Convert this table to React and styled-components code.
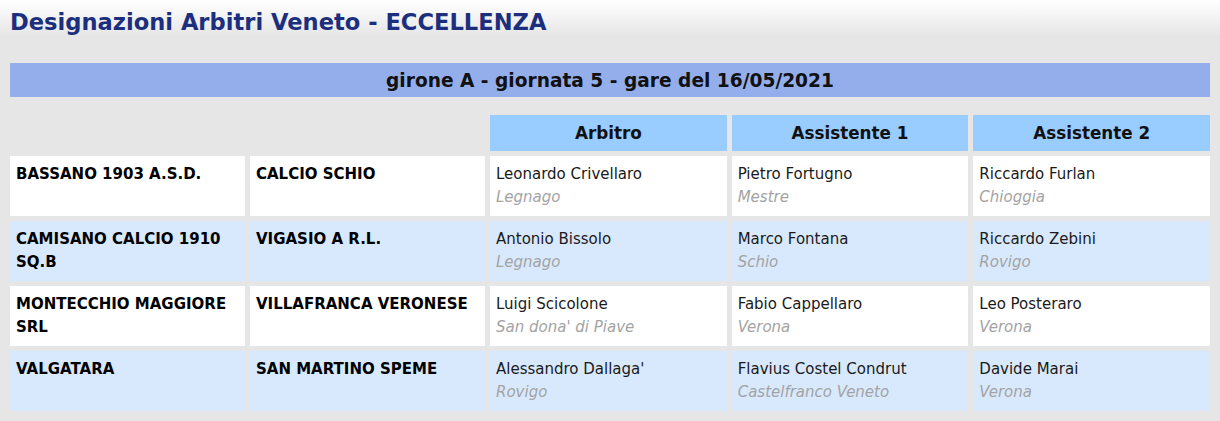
import styled, { createGlobalStyle } from 'styled-components';

const GlobalStyle = createGlobalStyle`
  html, body {
    margin: 0;
    padding: 0;
  }
  body {
    background: linear-gradient(to bottom, #ffffff 0px, #e6e6e6 36px) no-repeat, #e6e6e6;
    font-family: "DejaVu Sans", Verdana, sans-serif;
    min-height: 100vh;
  }
`;

const Page = styled.div`
  padding: 9px 10px 10px;
`;

const Title = styled.h1`
  margin: 0;
  font-size: 22.6px;
  line-height: 26px;
  font-weight: bold;
  color: #1c2f7e;
`;

const RoundBar = styled.div`
  margin-top: 28px;
  height: 34px;
  box-sizing: border-box;
  padding-top: 2px;
  line-height: 32px;
  background: #94aeec;
  color: #111;
  text-align: center;
  font-size: 18.6px;
  font-weight: bold;
`;

const Grid = styled.div`
  margin-top: 18px;
  display: grid;
  grid-template-columns: 235px 235px 1fr 1fr 1fr;
  column-gap: 5px;
  row-gap: 5px;
`;

const Blank = styled.div``;

const HeadCell = styled.div`
  height: 36px;
  line-height: 36px;
  background: #99ccff;
  color: #111;
  text-align: center;
  font-size: 16.8px;
  font-weight: bold;
`;

const Cell = styled.div`
  background: ${(p) => (p.$alt ? '#d8e9fd' : '#ffffff')};
  padding: 7px 6px;
  min-height: 46px;
  font-size: 15px;
  line-height: 23px;
`;

const Team = styled.div`
  font-weight: bold;
  color: #000;
`;

const Name = styled.div`
  color: #1a1a1a;
`;

const City = styled.div`
  color: #a3a3a3;
  font-style: italic;
`;

const matches = [
  {
    home: 'BASSANO 1903 A.S.D.',
    away: 'CALCIO SCHIO',
    refs: [
      ['Leonardo Crivellaro', 'Legnago'],
      ['Pietro Fortugno', 'Mestre'],
      ['Riccardo Furlan', 'Chioggia'],
    ],
  },
  {
    home: 'CAMISANO CALCIO 1910 SQ.B',
    away: 'VIGASIO A R.L.',
    refs: [
      ['Antonio Bissolo', 'Legnago'],
      ['Marco Fontana', 'Schio'],
      ['Riccardo Zebini', 'Rovigo'],
    ],
  },
  {
    home: 'MONTECCHIO MAGGIORE SRL',
    away: 'VILLAFRANCA VERONESE',
    refs: [
      ['Luigi Scicolone', "San dona' di Piave"],
      ['Fabio Cappellaro', 'Verona'],
      ['Leo Posteraro', 'Verona'],
    ],
  },
  {
    home: 'VALGATARA',
    away: 'SAN MARTINO SPEME',
    refs: [
      ["Alessandro Dallaga'", 'Rovigo'],
      ['Flavius Costel Condrut', 'Castelfranco Veneto'],
      ['Davide Marai', 'Verona'],
    ],
  },
];

export default function App() {
  return (
    <>
      <GlobalStyle />
      <Page>
        <Title>Designazioni Arbitri Veneto - ECCELLENZA</Title>
        <RoundBar>girone A - giornata 5 - gare del 16/05/2021</RoundBar>
        <Grid>
          <Blank />
          <Blank />
          <HeadCell>Arbitro</HeadCell>
          <HeadCell>Assistente 1</HeadCell>
          <HeadCell>Assistente 2</HeadCell>
          {matches.map((m, i) => {
            const alt = i % 2 === 1;
            return [
              <Cell key={`h${i}`} $alt={alt}>
                <Team>{m.home}</Team>
              </Cell>,
              <Cell key={`a${i}`} $alt={alt}>
                <Team>{m.away}</Team>
              </Cell>,
              ...m.refs.map(([name, city], j) => (
                <Cell key={`r${i}-${j}`} $alt={alt}>
                  <Name>{name}</Name>
                  <City>{city}</City>
                </Cell>
              )),
            ];
          })}
        </Grid>
      </Page>
    </>
  );
}
